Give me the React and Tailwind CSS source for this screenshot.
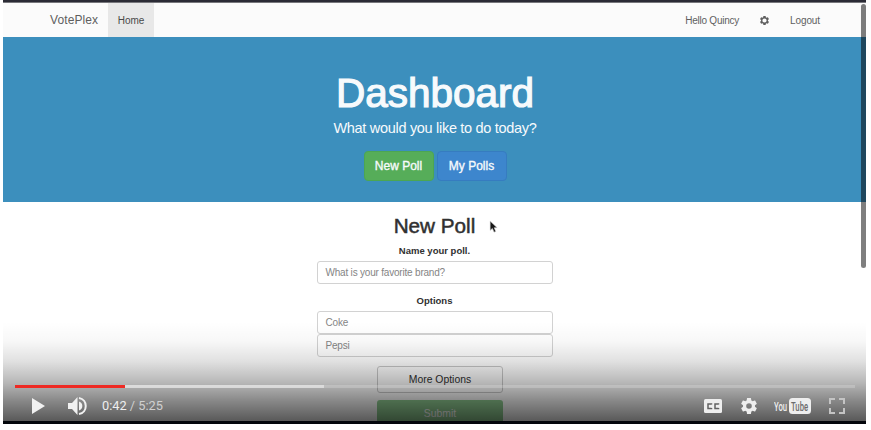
import React from "react";

const GEAR =
  "M19.43 12.98c.04-.32.07-.64.07-.98s-.03-.66-.07-.98l2.11-1.65c.19-.15.24-.42.12-.64l-2-3.46c-.12-.22-.39-.3-.61-.22l-2.49 1c-.52-.4-1.08-.73-1.69-.98l-.38-2.65C14.46 2.18 14.25 2 14 2h-4c-.25 0-.46.18-.49.42l-.38 2.65c-.61.25-1.17.59-1.69.98l-2.49-1c-.23-.09-.49 0-.61.22l-2 3.46c-.13.22-.07.49.12.64l2.11 1.65c-.04.32-.07.65-.07.98s.03.66.07.98l-2.11 1.65c-.19.15-.24.42-.12.64l2 3.46c.12.22.39.3.61.22l2.49-1c.52.4 1.08.73 1.69.98l.38 2.65c.03.24.24.42.49.42h4c.25 0 .46-.18.49-.42l.38-2.65c.61-.25 1.17-.59 1.69-.98l2.49 1c.23.09.49 0 .61-.22l2-3.46c.12-.22.07-.49-.12-.64l-2.11-1.65z";

function Navbar() {
  return (
    <nav className="flex h-[35px] items-stretch border-b border-[#d5e2ea] bg-[#fbfbfb] text-[10px] text-[#5f5f5f]">
      <div className="ml-[47px] flex w-[58px] items-center text-[12px] tracking-[0.1px]">VotePlex</div>
      <div className="flex w-[46px] items-center justify-center bg-[#e8e8e8] text-[#4a4a4a]">Home</div>
      <div className="mr-[46px] ml-auto flex items-center">
        <span className="tracking-[-0.25px]">Hello Quincy</span>
        <svg viewBox="0 0 24 24" className="mr-5 ml-5 h-[11px] w-[11px]" fill="#5f5f5f">
          <path fillRule="evenodd" d={GEAR + "M12 16.6a4.600 4.600 0 1 1 0-9.200 4.600 4.600 0 0 1 0 9.200z"} />
        </svg>
        <span className="tracking-[-0.1px]">Logout</span>
      </div>
    </nav>
  );
}

function Hero() {
  return (
    <header className="flex h-[165px] flex-col items-center bg-[#3c8fbd] pt-[31px] pl-px text-[#f7fafc]">
      <h1 className="h-[50px] text-[40.5px] leading-[50px] [-webkit-text-stroke:1.2px_#f7fafc]">Dashboard</h1>
      <p className="h-5 text-[14.5px] leading-5 tracking-[-0.3px] whitespace-nowrap">What would you like to do today?</p>
      <div className="mt-[13px] flex gap-[3px] text-[12px] [-webkit-text-stroke:0.35px_#f7fafc]">
        <button className="h-[30px] w-[70px] rounded-[4px] border border-[#4ca652] bg-[#56ad59]">New Poll</button>
        <button className="h-[30px] w-[70px] rounded-[4px] border border-[#367cc0] bg-[#3d86cd]">My Polls</button>
      </div>
    </header>
  );
}

function Field({ children }) {
  return (
    <div className="flex h-[23px] w-[236px] items-center rounded-[3px] border border-[#d2d2d2] bg-white pl-2 text-[10px] tracking-[-0.2px] text-[#858585]">
      {children}
    </div>
  );
}

function PollForm() {
  return (
    <main className="relative flex flex-col items-center pt-[10px] text-[#303030]">
      <h2 className="h-7 text-[20.700px] leading-7 [-webkit-text-stroke:0.5px_#303030]">New Poll</h2>
      <svg viewBox="0 0 12 18" className="absolute top-[18px] left-[486px] h-[14px] w-[9px]">
        <path d="M1.500 1v12.500l3-2.600 2.200 5 2.400-1-2.100-4.900h3.900z" fill="#181818" stroke="#ddd" strokeWidth=".8" />
      </svg>
      <div className="mt-[3px] mb-[2px] h-4 text-[9.500px] leading-4 font-bold">Name your poll.</div>
      <Field>What is your favorite brand?</Field>
      <div className="mt-[9px] mb-[2px] h-4 text-[9.500px] leading-4 font-bold">Options</div>
      <Field>Coke</Field>
      <Field>Pepsi</Field>
      <button className="mt-[9px] ml-[11px] h-[27px] w-[126px] rounded-[3px] border border-[#c9c9c9] text-[10.400px]">
        More Options
      </button>
      <button className="mt-[7px] ml-[11px] h-7 w-[126px] rounded-[3px] bg-[#90cd92] text-[10.400px] text-white">Submit</button>
    </main>
  );
}

function Controls() {
  return (
    <div className="absolute inset-x-0 bottom-[3px] flex h-[99px] flex-col justify-end bg-[linear-gradient(to_bottom,rgba(0,0,0,0)_0%,rgba(0,0,0,0.03)_20%,rgba(0,0,0,0.12)_40%,rgba(0,0,0,0.29)_62%,rgba(0,0,0,0.47)_80%,rgba(0,0,0,0.65)_100%)]">
      <div className="mr-[11px] ml-3 flex h-[3px] bg-white/20">
        <div className="w-[110px] bg-[#ee2a24]" />
        <div className="w-[199px] bg-white/45" />
      </div>
      <div className="flex h-[33px] items-center pt-[3px] pr-[21px] pl-[29px] text-[#eee]">
        <svg viewBox="0 0 13 16" className="h-4 w-[13px]" fill="#f1f1f1"><path d="M0 0l13 8-13 8z" /></svg>
        <svg viewBox="0 0 19 18" className="ml-[23px] h-[18px] w-[19px]" fill="#f1f1f1">
          <path d="M0 6h4l5.500-6v18L4 12H0zM11 4.500c4.500 1 4.500 8 0 9z" />
          <path d="M11 1c9 1.500 9 14.500 0 16" fill="none" stroke="#f1f1f1" strokeWidth="2" />
        </svg>
        <div className="ml-[15px] font-[Roboto,sans-serif] text-[12.800px] whitespace-pre text-[#d0d0d0]">
          <span className="text-[#eee]">0:42</span> / 5:25
        </div>
        <div className="ml-auto flex items-center">
          <svg viewBox="0 0 18 14" className="h-[14px] w-[18px]">
            <rect width="18" height="14" rx="1.500" fill="#eee" />
            <path d="M7.500 5.500V5H4v4.500h3.500V9M14.500 5.500V5H11v4.500h3.500V9" fill="none" stroke="#626262" strokeWidth="1.500" />
          </svg>
          <svg viewBox="2 2 20 20" className="ml-[19px] h-4 w-4" fill="#eee">
            <path fillRule="evenodd" d={GEAR + "M12 15.500a3.500 3.500 0 1 1 0-7 3.500 3.500 0 0 1 0 7z"} />
          </svg>
          <svg viewBox="0 0 37 16" className="ml-[17px] h-4 w-[37px]" fontFamily="Roboto, sans-serif" fontWeight="500">
            <text transform="translate(0 12.600) scale(.57 1)" fontSize="13.500" fill="#eee">You</text>
            <rect x="15" width="22" height="16" rx="3.500" fill="#eee" />
            <text transform="translate(17 12.600) scale(.57 1)" fontSize="13.500" fill="#6c6c6c">Tube</text>
          </svg>
          <svg viewBox="0 0 16 16" className="ml-[18px] h-4 w-4" fill="none" stroke="#c4c4c4" strokeWidth="2">
            <path d="M1 6V1h5M10 1h5v5M15 10v5h-5M6 15H1v-5" />
          </svg>
        </div>
      </div>
    </div>
  );
}

export default function App() {
  return (
    <div className="h-[430px] w-[871px] overflow-hidden bg-white pl-[3px] font-['Liberation_Sans',Arial,sans-serif]">
      <div className="relative h-[424px] w-[863px] overflow-hidden">
        <div className="h-[2px] bg-[#2b2b35]" />
        <div className="h-px bg-[#77777c]" />
        <Navbar />
        <div className="-mt-px">
          <Hero />
        </div>
        <PollForm />
        <div className="absolute top-[4px] right-0 h-[264px] w-[5px] rounded-full bg-black/50" />
        <Controls />
        <div className="absolute inset-x-0 bottom-0 h-[3px] bg-[#03060c]" />
      </div>
    </div>
  );
}
